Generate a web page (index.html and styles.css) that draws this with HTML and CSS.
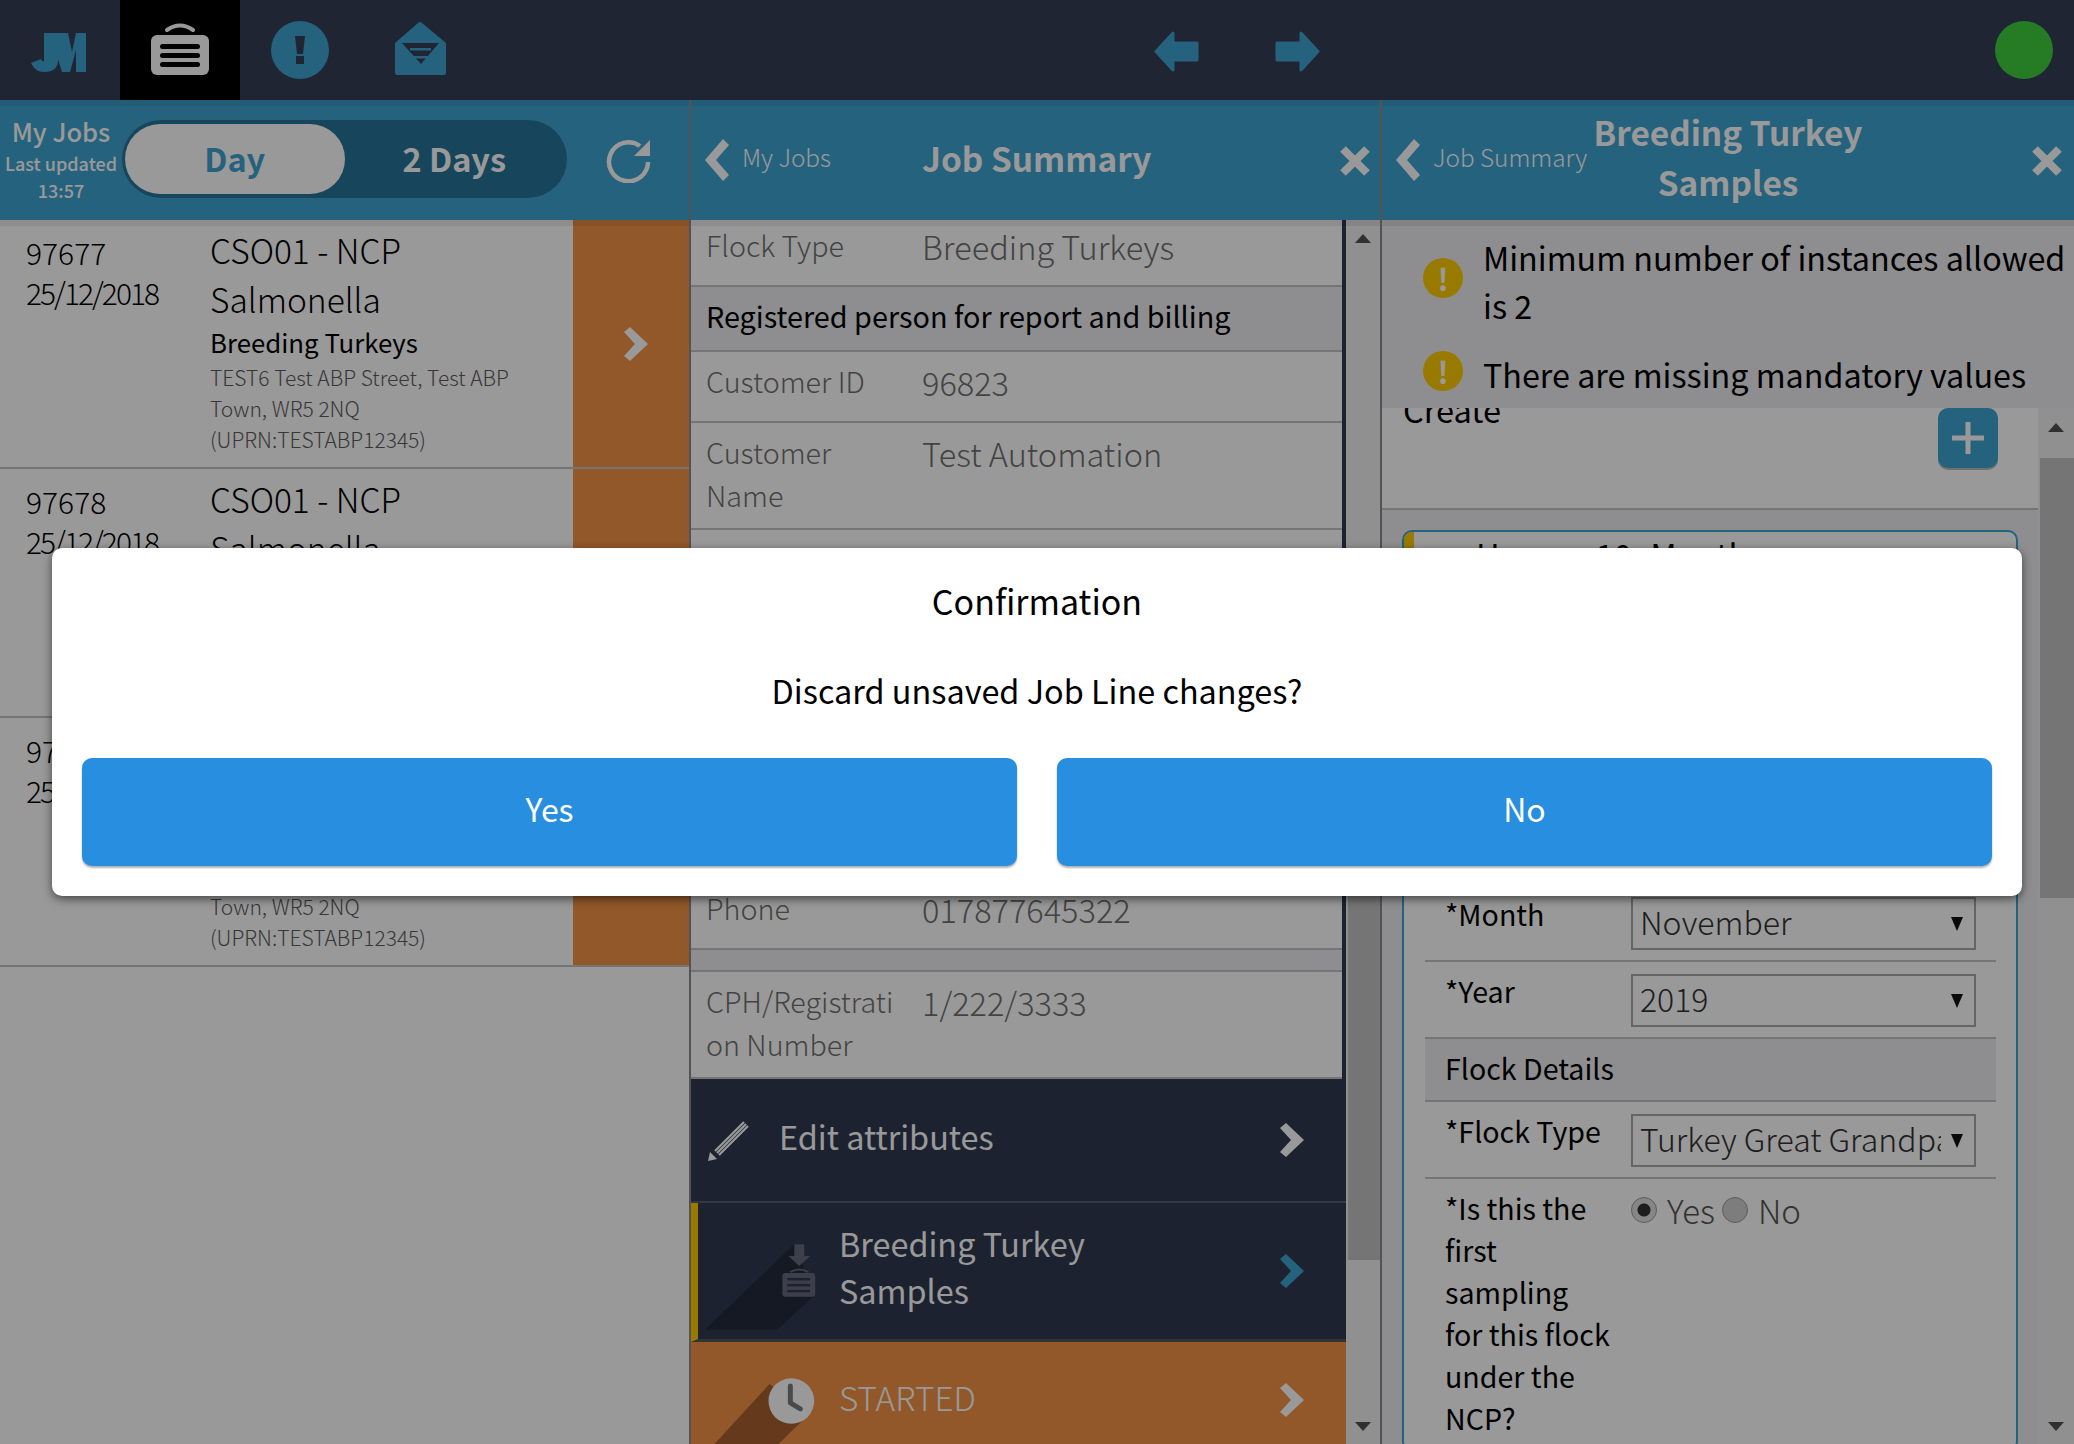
FILE: index.html
```html
<!DOCTYPE html>
<html lang="en">
<head>
<meta charset="utf-8">
<title>Job Manager</title>
<link rel="stylesheet" href="styles.css">
</head>
<body>
<div class="app">
  <nav class="topbar">
    <div class="nav-cell">
      <svg class="nav-icon" viewBox="0 0 120 100"><path class="teal" d="M44 33H58V60Q58 72 44 72Q35 72 31 63L41 59Q42 62 44 61Z"/><path class="teal" d="M57 33H68L72 52L76 33H86V72H76V50L70 72H62L57 56Z"/></svg>
    </div>
    <div class="nav-cell nav-cell-active">
      <svg class="nav-icon" viewBox="0 0 120 100"><path class="hand" d="M47 30Q60 21 73 30"/><rect class="case" x="31" y="35" width="58" height="40" rx="6"/><rect class="slot" x="40" y="44" width="40" height="5" rx="2.5"/><rect class="slot" x="40" y="53" width="40" height="5" rx="2.5"/><rect class="slot" x="40" y="62" width="40" height="5" rx="2.5"/></svg>
    </div>
    <div class="nav-cell">
      <svg class="nav-icon" viewBox="0 0 120 100"><circle class="teal" cx="60" cy="50" r="29"/><path class="navy" d="M55 36H65L63 54H57Z"/><rect class="navy" x="56" y="56" width="8" height="8"/></svg>
    </div>
    <div class="nav-cell">
      <svg class="nav-icon" viewBox="0 0 120 100"><path class="teal" d="M35 43L58 23Q60 21 62 23L86 43V73Q86 75 84 75H37Q35 75 35 73Z"/><path class="navy" d="M42 43H79L61 64Z"/><rect class="teal" x="50" y="48" width="21" height="2.5"/><rect class="teal" x="53" y="56" width="15" height="2.5"/></svg>
    </div>
    <div class="nav-arrows">
      <svg class="nav-arrow" viewBox="0 0 45 41"><path class="teal round" d="M2 20.500L19 2V12H43V29H19V39Z"/></svg>
      <svg class="nav-arrow" viewBox="0 0 45 41"><path class="teal round" d="M43 20.500L26 2V12H2V29H26V39Z"/></svg>
    </div>
    <div class="status-dot"></div>
  </nav>

  <main class="panes">
    <section class="pane">
      <header class="pane-head pane-head-jobs">
        <div class="jobs-meta">
          <div class="jobs-title">My Jobs</div>
          <div class="jobs-updated">Last updated</div>
          <div class="jobs-updated">13:57</div>
        </div>
        <div class="toggle">
          <div class="toggle-opt toggle-opt-on">Day</div>
          <div class="toggle-opt">2 Days</div>
        </div>
        <svg class="refresh" viewBox="0 0 46 46"><path class="refresh-ring" d="M34 9A19.500 19.500 0 1 0 42 25"/><path class="refresh-head" d="M44 3V19H28Z"/></svg>
      </header>
      <div class="pane-body">
        <article class="job">
          <div class="job-main">
            <div class="job-id"><div>97677</div><div class="job-date">25/12/2018</div></div>
            <div class="job-info">
              <div class="job-title">CSO01 - NCP Salmonella</div>
              <div class="job-breed">Breeding Turkeys</div>
              <div class="job-addr">TEST6 Test ABP Street, Test ABP Town, WR5 2NQ (UPRN:TESTABP12345)</div>
            </div>
          </div>
          <div class="job-go"><svg class="chev" viewBox="0 0 24 34"><path d="M0 5L6 0L24 17L6 34L0 29L11 17Z"/></svg></div>
        </article>
        <article class="job">
          <div class="job-main">
            <div class="job-id"><div>97678</div><div class="job-date">25/12/2018</div></div>
            <div class="job-info">
              <div class="job-title">CSO01 - NCP Salmonella</div>
              <div class="job-breed">Breeding Turkeys</div>
              <div class="job-addr">TEST6 Test ABP Street, Test ABP Town, WR5 2NQ (UPRN:TESTABP12345)</div>
            </div>
          </div>
          <div class="job-go"><svg class="chev" viewBox="0 0 24 34"><path d="M0 5L6 0L24 17L6 34L0 29L11 17Z"/></svg></div>
        </article>
        <article class="job">
          <div class="job-main">
            <div class="job-id"><div>97679</div><div class="job-date">25/12/2018</div></div>
            <div class="job-info">
              <div class="job-title">CSO01 - NCP Salmonella</div>
              <div class="job-breed">Breeding Turkeys</div>
              <div class="job-addr">TEST6 Test ABP Street, Test ABP Town, WR5 2NQ (UPRN:TESTABP12345)</div>
            </div>
          </div>
          <div class="job-go"><svg class="chev" viewBox="0 0 24 34"><path d="M0 5L6 0L24 17L6 34L0 29L11 17Z"/></svg></div>
        </article>
      </div>
    </section>

    <section class="pane">
      <header class="pane-head">
        <svg class="back" viewBox="0 0 24 42"><path d="M24 6L18 0L0 21L18 42L24 36L11 21Z"/></svg>
        <div class="back-label back-label-jobs">My Jobs</div>
        <h1 class="pane-title pane-title-summary">Job Summary</h1>
        <svg class="close" viewBox="0 0 30 30"><path d="M3 3L27 27M27 3L3 27"/></svg>
      </header>
      <div class="pane-body pane-scroll">
        <div class="summary">
          <div class="summary-list">
            <div class="kv"><div class="kv-key">Flock Type</div><div class="kv-val">Breeding Turkeys</div></div>
            <div class="band">Registered person for report and billing</div>
            <div class="kv"><div class="kv-key">Customer ID</div><div class="kv-val">96823</div></div>
            <div class="kv"><div class="kv-key">Customer Name</div><div class="kv-val">Test Automation</div></div>
            <div class="kv-hidden"></div>
            <div class="kv"><div class="kv-key">Phone</div><div class="kv-val">017877645322</div></div>
            <div class="band band-empty"></div>
            <div class="kv"><div class="kv-key kv-break">CPH/Registration Number</div><div class="kv-val">1/222/3333</div></div>
          </div>
          <div class="menu-row menu-edit">
            <svg class="pencil" viewBox="0 0 42 42"><path class="pencil-line" d="M11 36L40 7M7 32L36 3M9 34L38 5"/><path class="pencil-tip" d="M0 42L2 33L9 40Z"/></svg>
            <div class="menu-label">Edit attributes</div>
            <svg class="chev" viewBox="0 0 24 34"><path d="M0 5L6 0L24 17L6 34L0 29L11 17Z"/></svg>
          </div>
          <div class="menu-row menu-line">
            <svg class="menu-art" viewBox="0 0 142 136"><path class="art-shadow" d="M7 127L97 41L117 93L80 127Z"/><path class="art-icon" d="M97 41H107V53H113L102 63L91 53H97Z"/><path class="art-hand" d="M93 69Q102 64 111 69"/><rect class="art-icon" x="85" y="70" width="33" height="24" rx="3"/><rect class="art-slot" x="90" y="75" width="23" height="2.500"/><rect class="art-slot" x="90" y="81" width="23" height="2.500"/><rect class="art-slot" x="90" y="87" width="23" height="2.500"/></svg>
            <div class="menu-label">Breeding Turkey Samples</div>
            <svg class="chev chev-teal" viewBox="0 0 24 34"><path d="M0 5L6 0L24 17L6 34L0 29L11 17Z"/></svg>
          </div>
          <div class="menu-row menu-started">
            <svg class="menu-art menu-art-clock" viewBox="0 0 142 118"><path class="clock-shadow" d="M72 43L16 104V118H66L112 73Z"/><circle class="clock-face" cx="94" cy="60" r="23"/><path class="clock-hand" d="M93 45V62L103 68"/></svg>
            <div class="menu-label menu-label-started">STARTED</div>
            <svg class="chev" viewBox="0 0 24 34"><path d="M0 5L6 0L24 17L6 34L0 29L11 17Z"/></svg>
          </div>
        </div>
        <div class="scrollbar">
          <div class="sb-arrow sb-up"></div>
          <div class="sb-track sb-track-summary"><div class="sb-thumb"></div></div>
          <div class="sb-arrow sb-down"></div>
        </div>
      </div>
    </section>

    <section class="pane pane-last">
      <header class="pane-head">
        <svg class="back" viewBox="0 0 24 42"><path d="M24 6L18 0L0 21L18 42L24 36L11 21Z"/></svg>
        <div class="back-label back-label-summary">Job Summary</div>
        <h1 class="pane-title pane-title-line">Breeding Turkey Samples</h1>
        <svg class="close close-last" viewBox="0 0 30 30"><path d="M3 3L27 27M27 3L3 27"/></svg>
      </header>
      <div class="pane-body pane-form">
        <div class="warnings">
          <div class="warning warning-a"><span class="warn-dot">!</span><div>Minimum number of instances allowed is 2</div></div>
          <div class="warning warning-b"><span class="warn-dot">!</span><div>There are missing mandatory values</div></div>
        </div>
        <div class="form-wrap">
          <div class="form-scroll">
            <div class="create-row">
              <div class="create-label">Create</div>
              <div class="plus"><svg viewBox="0 0 36 36"><path d="M18 2V34M2 18H34"/></svg></div>
            </div>
            <div class="card-zone">
              <div class="card">
                <div class="card-title">Harrow 10- Month</div>
                <div class="card-hidden"></div>
                <div class="field"><div class="field-label">*Month</div><div class="select"><span class="select-text">November</span><i class="select-arrow"></i></div></div>
                <div class="field"><div class="field-label">*Year</div><div class="select"><span class="select-text">2019</span><i class="select-arrow"></i></div></div>
                <div class="card-band">Flock Details</div>
                <div class="field"><div class="field-label">*Flock Type</div><div class="select"><span class="select-text">Turkey Great Grandparent</span><i class="select-arrow"></i></div></div>
                <div class="field field-last">
                  <div class="field-label">*Is this the<br>first<br>sampling<br>for this flock<br>under the<br>NCP?</div>
                  <div class="radios">
                    <span class="radio radio-on"></span><span class="radio-text">Yes</span>
                    <span class="radio"></span><span class="radio-text">No</span>
                  </div>
                </div>
              </div>
            </div>
          </div>
          <div class="scrollbar scrollbar-form">
            <div class="sb-arrow sb-up sb-up-form"></div>
            <div class="sb-track sb-track-form"><div class="sb-thumb"></div></div>
            <div class="sb-arrow sb-down"></div>
          </div>
        </div>
      </div>
    </section>
  </main>

  <div class="overlay">
    <div class="modal" role="dialog">
      <div class="modal-title">Confirmation</div>
      <div class="modal-msg">Discard unsaved Job Line changes?</div>
      <div class="modal-actions">
        <button class="modal-btn" type="button">Yes</button>
        <button class="modal-btn" type="button">No</button>
      </div>
    </div>
  </div>
</div>
</body>
</html>
```
FILE: styles.css
```css
* { box-sizing: border-box; }
html, body { margin: 0; padding: 0; height: 100%; }
body {
  font-family: "Noto Sans CJK SC", "Source Sans Pro", "Open Sans", sans-serif;
  background: #fff;
  color: #000;
  overflow: hidden;
}
.app { position: relative; width: 2074px; height: 1444px; display: flex; flex-direction: column; overflow: hidden; }

.teal { fill: #3fa3d2; }
.navy { fill: #343f54; }
.round { stroke: #3fa3d2; stroke-width: 3; stroke-linejoin: round; }

/* top bar */
.topbar { flex: 0 0 100px; display: flex; align-items: stretch; background: #343f54; position: relative; }
.nav-cell { width: 120px; }
.nav-cell-active { background: #000; }
.nav-icon { display: block; width: 120px; height: 100px; }
.hand { fill: none; stroke: #fff; stroke-width: 4; stroke-linecap: round; }
.case { fill: #fff; }
.slot { fill: #000; }
.nav-arrows { margin-left: 674px; display: flex; gap: 76px; align-items: center; padding-top: 2px; }
.nav-arrow { width: 45px; height: 41px; display: block; }
.status-dot { margin-left: auto; margin-right: 21px; margin-top: 21px; width: 58px; height: 58px; border-radius: 50%; background: #3fcf3f; }

/* panes */
.panes { flex: 1; display: grid; grid-template-columns: 691px 691px 692px; grid-template-rows: minmax(0, 1fr); min-height: 0; }
.pane { display: flex; flex-direction: column; min-width: 0; min-height: 0; border-right: 2px solid #8a8a8a; }
.pane-last { border-right: 0; }

.pane-head {
  flex: 0 0 120px;
  display: flex;
  align-items: center;
  background: #3fa3d2;
  color: #fff;
  box-shadow: inset 0 6px 0 rgba(0,0,0,.06);
  position: relative;
  padding-left: 14px;
}
.pane-head-jobs { padding-left: 0; }
.jobs-meta { width: 122px; flex: none; text-align: center; }
.jobs-title { font-size: 25.500px; line-height: 34px; font-weight: 500; margin: -3px 0 2px; }
.jobs-updated { font-size: 18px; line-height: 27px; font-weight: 500; }
.toggle { width: 445px; height: 78px; flex: none; border-radius: 39px; background: #27759a; padding: 4px 3px; display: flex; margin-top: -2px; }
.toggle-opt { width: 220px; border-radius: 35px; color: #fff; font-size: 32.500px; font-weight: 600; text-align: center; line-height: 68px; }
.toggle-opt-on { background: #fff; color: #3fa3d2; }
.refresh { width: 46px; height: 46px; margin-left: 39px; flex: none; }
.refresh-ring { fill: none; stroke: #fff; stroke-width: 4.500; }
.refresh-head { fill: #fff; }

.back { width: 24px; height: 42px; fill: #fff; flex: none; }
.back-label { font-size: 24.300px; font-weight: 300; margin-left: 13px; margin-bottom: 7px; flex: none; white-space: nowrap; }
.back-label-jobs { width: 180px; }
.back-label-summary { width: 153px; }
.pane-title { margin: 0 0 6px; font-size: 33.400px; font-weight: 600; }
.pane-title-summary { flex: none; }
.pane-title-line { width: 284px; text-align: center; line-height: 50px; }
.close { position: absolute; right: 10px; top: 46px; width: 30px; height: 30px; fill: none; stroke: #fff; stroke-width: 8; }
.close-last { right: 12px; }

.pane-body { flex: 1; min-height: 0; position: relative; overflow: hidden; background: #fff; }
.pane-body::before { content: ""; position: absolute; z-index: 2; left: 0; right: 0; top: 0; height: 6px; background: rgba(0,0,0,.08); }

/* jobs */
.job { height: 249px; display: flex; border-bottom: 2px solid #c3c3c3; }
.job-main { flex: 1; display: flex; padding-left: 26px; min-width: 0; }
.job-id { width: 184px; flex: none; font-size: 30px; line-height: 40px; font-weight: 300; padding-top: 12px; }
.job-date { letter-spacing: -2px; }
.job-info { flex: 1; padding-top: 5px; padding-right: 22px; }
.job-title { font-size: 33.500px; line-height: 49px; font-weight: 300; }
.job-breed { font-size: 25.800px; line-height: 37px; }
.job-addr { font-size: 21px; line-height: 31px; font-weight: 300; color: #5c5c5c; margin-top: 2px; }
.job-go { width: 116px; flex: none; background: #f39346; display: flex; align-items: center; justify-content: center; padding-left: 10px; }
.chev { width: 24px; height: 34px; fill: #fff; flex: none; }
.chev-teal { fill: #3fa3d2; }

/* summary */
.pane-scroll { display: flex; }
.summary { flex: 1; min-width: 0; background: #303950; }
.summary-list { width: 651px; background: #fff; margin-top: -4px; }
.kv { display: flex; padding: 7px 12px 12px 15px; border-bottom: 2px solid #c3c3c3; }
.kv-key { width: 216px; flex: none; padding-right: 16px; font-size: 28.700px; line-height: 43px; font-weight: 300; color: #717171; }
.kv-break { word-break: break-all; }
.kv-val { font-size: 32.500px; line-height: 50px; font-weight: 300; color: #717171; margin-top: -2px; margin-bottom: 2px; }
.kv-hidden { height: 349px; border-bottom: 2px solid #c3c3c3; }
.band { background: #ededf0; font-size: 28.800px; line-height: 58px; height: 65px; padding-left: 15px; border-bottom: 2px solid #c3c3c3; }
.band-empty { height: 22px; }

.menu-row { display: flex; align-items: center; color: #fff; padding-right: 42px; }
.menu-edit { height: 124px; padding-left: 17px; border-bottom: 2px solid #565d6c; }
.pencil { width: 42px; height: 42px; flex: none; margin-right: 29px; }
.pencil-line { fill: none; stroke: #fff; stroke-width: 2.200; }
.pencil-tip { fill: #fff; }
.menu-label { flex: 1; font-size: 32.400px; line-height: 47px; margin-bottom: 10px; }
.menu-line { height: 139px; border-left: 7px solid #ffcc00; border-bottom: 3px solid #555; }
.menu-line .menu-label { padding-right: 130px; margin-bottom: 10px; }
.menu-art { width: 141px; height: 136px; flex: none; }
.art-shadow { fill: #242a3b; }
.art-icon { fill: #666a7c; }
.art-hand { fill: none; stroke: #666a7c; stroke-width: 2; }
.art-slot { fill: #303950; }
.menu-started { height: 116px; background: #f39346; padding-left: 7px; }
.menu-art-clock { height: 118px; }
.clock-shadow { fill: #a8602d; }
.clock-face { fill: #fff; }
.clock-hand { fill: none; stroke: #7c7c7c; stroke-width: 5; stroke-linecap: round; stroke-linejoin: round; }
.menu-label-started { font-size: 33.300px; font-weight: 300; margin-bottom: 8px; }

/* scrollbars */
.scrollbar { width: 34px; flex: none; background: #f1f1f1; display: flex; flex-direction: column; align-items: center; position: relative; }
.scrollbar-form { width: 36px; }
.sb-arrow { flex: none; width: 0; height: 0; border-left: 8px solid transparent; border-right: 8px solid transparent; }
.sb-up { margin-top: 14px; border-bottom: 9px solid #505050; }
.sb-up-form { margin-top: 15px; }
.sb-down { margin-bottom: 13px; border-top: 9px solid #505050; }
.sb-track { flex: 1; width: 100%; min-height: 0; }
.sb-thumb { background: #c3c3c3; margin-left: 2px; }
.sb-track-summary .sb-thumb { height: 687px; margin-top: 330px; }
.sb-track-form .sb-thumb { height: 440px; margin-top: 26px; }

/* form */
.pane-form { display: flex; flex-direction: column; }
.warnings { flex: 0 0 188px; background: #ededf0; position: relative; z-index: 1; }
.warning { display: flex; align-items: center; font-size: 32.300px; line-height: 48px; }
.warning-a { padding: 13px 0 0 41px; }
.warning-b { padding: 21px 0 0 41px; }
.warn-dot { width: 40px; height: 40px; flex: none; margin: 0 20px 6px 0; border-radius: 50%; background: #ffcc00; color: #fff; font-size: 30px; font-weight: 700; line-height: 40px; text-align: center; }
.form-wrap { flex: 1; min-height: 0; display: flex; }
.form-scroll { flex: 1; min-width: 0; overflow: hidden; }
.create-row { height: 102px; display: flex; justify-content: space-between; align-items: flex-start; border-bottom: 2px solid #c3c3c3; padding: 0 40px 0 21px; }
.create-label { font-size: 32.500px; line-height: 44px; margin-top: -21px; }
.plus { width: 60px; height: 60px; background: #3fa3d2; border-radius: 10px; box-shadow: 0 2px 0 #bbb; display: flex; align-items: center; justify-content: center; }
.plus svg { width: 36px; height: 36px; fill: none; stroke: #fff; stroke-width: 5; }
.card-zone { background: #ededf0; padding: 20px 20px 0 20px; }
.card { background: #fff; border: 2px solid #3fa3d2; border-radius: 10px; padding: 0 20px 0 21px; overflow: hidden; }
.card-title { font-size: 32.500px; line-height: 44px; margin-left: -21px; padding-left: 62px; border-left: 10px solid #ffcc00; }
.card-hidden { height: 309px; }
.field { display: flex; border-bottom: 2px solid #c3c3c3; padding: 12px 20px 10px 20px; }
.field-label { width: 186px; padding-right: 10px; flex: none; font-size: 28.600px; line-height: 42px; margin-top: -4px; }
.field-last { border-bottom: 0; }
.select { width: 345px; height: 53px; flex: none; border: 2px solid #a8a8a8; display: flex; align-items: center; padding: 0 11px 0 7px; overflow: hidden; }
.select-text { flex: 1; min-width: 0; overflow: hidden; white-space: nowrap; font-size: 32px; font-weight: 300; color: #333; margin-bottom: 5px; }
.select-arrow { flex: none; width: 0; height: 0; margin-left: 10px; border-left: 6px solid transparent; border-right: 6px solid transparent; border-top: 14px solid #111; }
.card-band { background: #ededf0; height: 65px; line-height: 58px; font-size: 28.600px; padding-left: 20px; border-top: 2px solid #c3c3c3; border-bottom: 2px solid #c3c3c3; margin-top: -2px; }
.radios { display: flex; align-items: center; height: 42px; font-size: 33px; font-weight: 300; color: #555; margin-top: -2px; }
.radio { width: 26px; height: 26px; flex: none; border-radius: 50%; border: 1px solid #9a9a9a; background: #d0d0d0; display: block; }
.radio-on { background: radial-gradient(circle, #333 0 6px, #dfdfdf 7px); }
.radio-text { margin: 0 7px 0 10px; }

/* overlay */
.overlay { position: absolute; inset: 0; z-index: 10; background: rgba(0,0,0,.4); display: flex; align-items: center; justify-content: center; }
.modal { width: 1970px; height: 348px; background: #fff; border-radius: 10px; padding: 30px; box-shadow: 0 3px 10px rgba(0,0,0,.55); text-align: center; }
.modal-title { font-size: 34px; line-height: 46px; }
.modal-msg { font-size: 32.400px; line-height: 46px; margin-top: 43px; }
.modal-actions { display: flex; gap: 40px; margin-top: 45px; }
.modal-btn { flex: 1; height: 108px; border: 0; border-radius: 10px; background: #288ee0; box-shadow: 0 2px 2px rgba(0,0,0,.3); color: #fff; font: inherit; font-size: 32px; padding: 0 0 8px; }
```
